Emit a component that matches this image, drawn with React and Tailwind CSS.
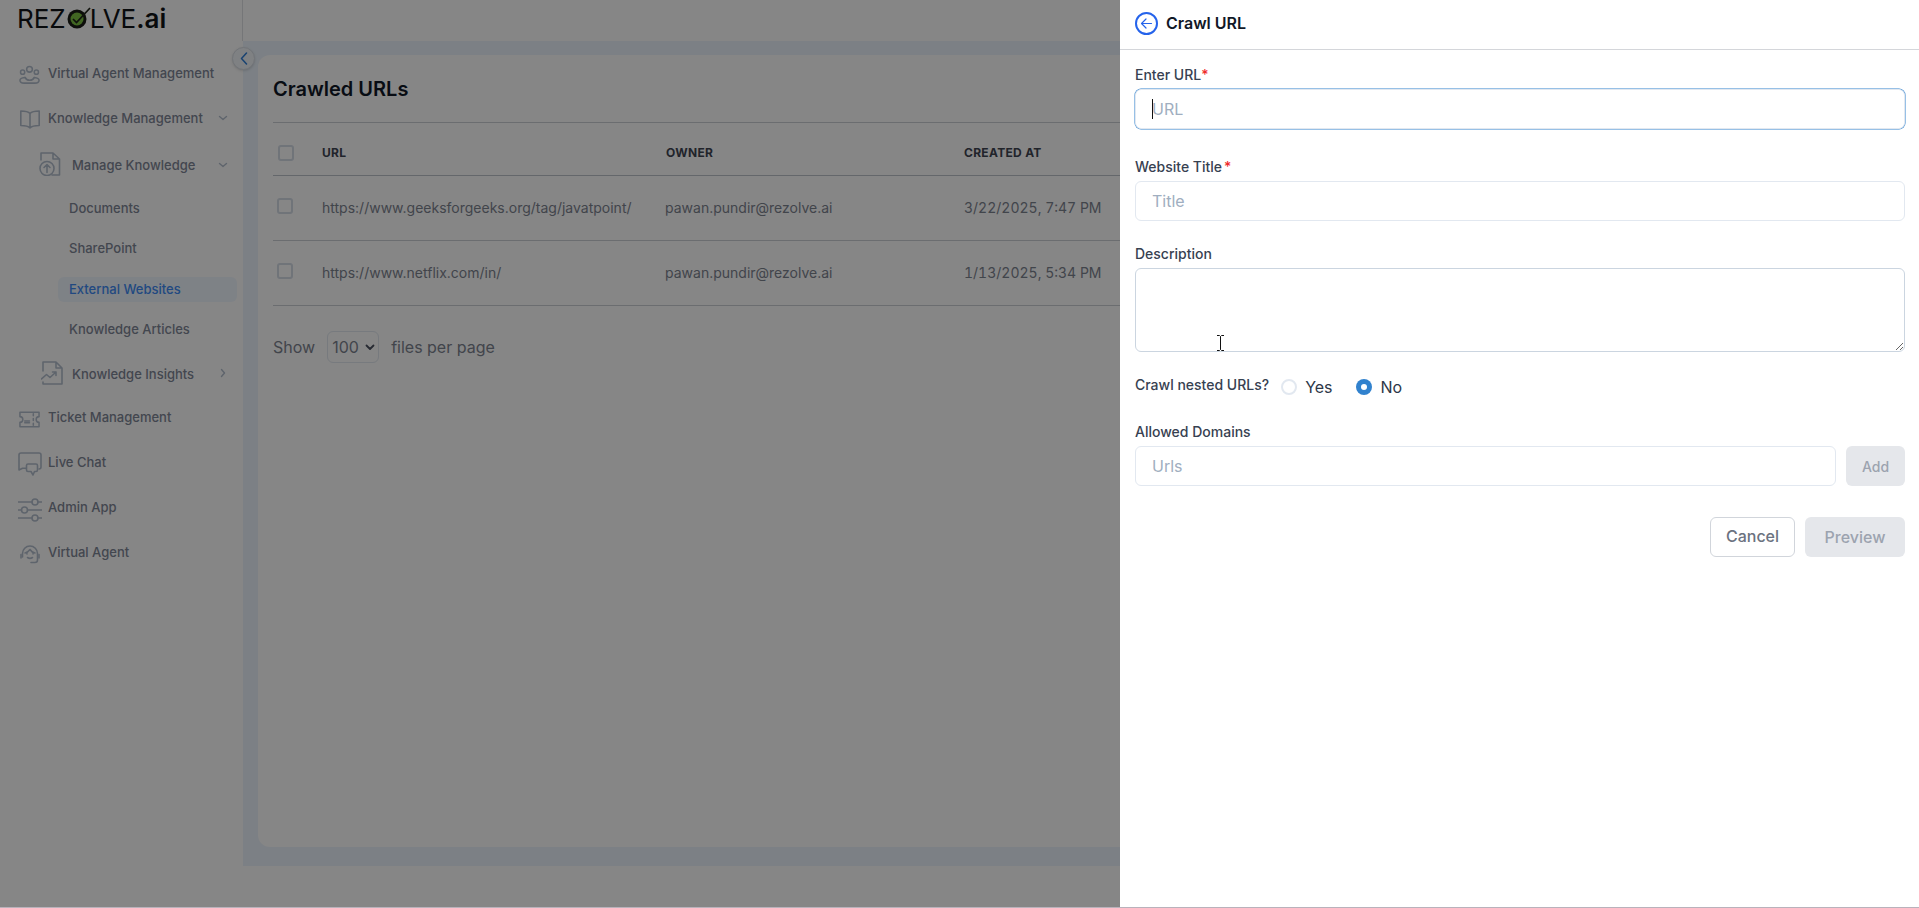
import React from "react";

const Chevron = ({ dir = "down", className = "" }) => (
  <svg width="12" height="12" viewBox="0 0 12 12" fill="none" stroke="currentColor" strokeWidth="1.4" strokeLinecap="round" strokeLinejoin="round" className={className}>
    {dir === "down" ? <path d="M2.5 4.5 6 7.5l3.5-3" /> : <path d="M4.5 2.5 7.5 6l-3 3.5" />}
  </svg>
);

const ic = { fill: "none", stroke: "currentColor", strokeWidth: 1.6, strokeLinecap: "round", strokeLinejoin: "round" };

const UsersIcon = () => (
  <svg width="22" height="20" viewBox="0 0 22 20" {...ic}>
    <circle cx="11" cy="4" r="3" />
    <circle cx="3.8" cy="7" r="2.2" />
    <circle cx="18.2" cy="7" r="2.2" />
    <path d="M6 12.5c-2.4.2-5 1-5 3s2.4 3 4.4 3h11.2c2 0 4.4-1 4.4-3s-2.6-2.8-5-3c-.6 1.6-2.8 3-4.8 3s-4.200-1.400-4.800-3Z" />
  </svg>
);
const BookIcon = () => (
  <svg width="20" height="19" viewBox="0 0 20 19" {...ic}>
    <path d="M10 3.500C8.500 1.800 5.500 1 .8 1v14.500c4.700 0 7.700.8 9.200 2.500 1.500-1.700 4.500-2.500 9.200-2.500V1C14.500 1 11.500 1.800 10 3.500Zm0 0V18" />
  </svg>
);
const ManageIcon = () => (
  <svg width="22" height="24" viewBox="0 0 22 24" {...ic}>
    <path d="M2 8V1h12l6.500 6v16H13M14 1v6h6.500" />
    <circle cx="8" cy="16.500" r="7" />
    <path d="M8 20.500v-7.500M5 15.500l3-3 3 3" />
  </svg>
);
const InsightsIcon = () => (
  <svg width="22" height="24" viewBox="0 0 22 24" {...ic}>
    <path d="M2 10V1h13l6 6v16H2v-2M15 1v6h6" />
    <path d="M.5 18l5-4.500 3.500 3 6-5.500M11.500 11H15v3.500" />
  </svg>
);
const TicketIcon = () => (
  <svg width="22" height="17" viewBox="0 0 22 17" {...ic}>
    <path d="M1 1h20v4.500a3 3 0 0 0 0 6V16H1v-4.500a3 3 0 0 0 0-6V1Z" />
    <path d="M15 2.500v2M15 7.500v2M15 12.500v2M6 10h5M6 12h5" />
  </svg>
);
const ChatIcon = () => (
  <svg width="24" height="24" viewBox="0 0 24 24" {...ic}>
    <path d="M3 1h18a2 2 0 0 1 2 2v12a2 2 0 0 1-2 2M3 1a2 2 0 0 0-2 2v15l3.500-1.800H8M1 3v14" />
    <path d="M10 12h8a1.500 1.500 0 0 1 1.500 1.500v4.500a1.500 1.500 0 0 1-1.500 1.500h-1.500L15 23l-2-3.500h-3A1.500 1.500 0 0 1 8.500 18v-4.500A1.500 1.500 0 0 1 10 12Z" />
  </svg>
);
const SlidersIcon = () => (
  <svg width="24" height="24" viewBox="0 0 24 24" {...ic}>
    <path d="M0 4h14M20 4h4M0 12h3.500M9.500 12H24M0 20h14M20 20h4" />
    <circle cx="17" cy="4" r="3" />
    <circle cx="6.500" cy="12" r="3" />
    <circle cx="17" cy="20" r="3" />
  </svg>
);
const AgentIcon = () => (
  <svg width="20" height="19" viewBox="0 0 20 19" {...ic}>
    <path d="M2.500 12V8.500a7.500 7.500 0 0 1 15 0V15a2.500 2.500 0 0 1-2.500 2.500h-4" />
    <path d="M1 9.500v3.500M19 9.500v3.500M5 8c2-.3 3.500-1.500 5-3.500 1.200 2 2.800 3.200 5 3.500M7 8.500v.5M13 8.500v.5M7.500 12.500c1.500 1 3.500 1 5 0" />
  </svg>
);

const Row = ({ h, pl, gap, icon, label, chevron, extra = "", chevClass = "" }) => (
  <div className={`flex items-center relative shrink-0 ${h} ${pl} ${extra}`}>
    <span className={`flex items-center justify-center text-[#b4bfce] shrink-0 ${gap}`}>{icon}</span>
    <span className="text-[13px] font-medium text-[#7f8797] whitespace-nowrap">{label}</span>
    {chevron && (
      <span className={`absolute left-[217px] text-[#b4bfce] ${chevClass}`}>
        <Chevron dir={chevron} />
      </span>
    )}
  </div>
);

const Sub = ({ h, label, active, extra = "" }) => (
  <div className={`flex items-center shrink-0 ml-[58px] w-[179px] pl-[11px] rounded-md ${h} ${extra} ${active ? "bg-[#f0f7ff]" : ""}`}>
    <span className={`text-[13px] font-medium whitespace-nowrap ${active ? "text-[#3f8cf5]" : "text-[#7f8797]"}`}>{label}</span>
  </div>
);

const Box = ({ className = "" }) => (
  <span className={`block w-4 h-4 rounded-[3px] border-2 border-[#d5dce6] ${className}`} />
);

const TableRow = ({ url, owner, date }) => (
  <div className="grid grid-cols-[49px_343px_299px_1fr] items-center h-[65px] border-b border-[#cbcfd6] text-sm text-[#7d8390]">
    <div className="pl-1 -mt-[5px]"><Box /></div>
    <div>{url}</div>
    <div>{owner}</div>
    <div className="tabular-nums">{date}</div>
  </div>
);

const Label = ({ children, star, starGap = "" }) => (
  <div className="h-5 flex items-center text-sm font-medium text-[#374151] leading-5">
    {children}
    {star && <span className={`text-[#ef2b2b] ${starGap}`}>*</span>}
  </div>
);

const inputCls = "block w-full h-10 px-4 rounded-md border border-[#e2e8f0] bg-white text-base text-[#1a202c] placeholder:text-[#a0aec0] outline-none";

export default function App() {
  return (
    <div className="relative w-full h-[908px] overflow-hidden bg-white font-['Inter','Liberation_Sans',sans-serif]">
      <header className="flex h-[41px]">
        <div className="w-[243px] h-full border-r border-[#dfe1e5] pl-[17px] flex items-center">
          <div className="flex items-center h-[22px] -mt-[3px] text-[#111317] text-[26px] font-normal leading-none">
            <span>REZ</span>
            <svg width="22" height="22" viewBox="0 0 22 22" className="mx-[1px] overflow-visible">
              <circle cx="10" cy="11" r="9.500" fill="#1a1c16" />
              <circle cx="10" cy="11" r="6.500" fill="#7cc242" />
              <path d="M6 11l3.500 3.500L23 0" fill="none" stroke="#20241a" strokeWidth="1.700" />
            </svg>
            <span>LVE</span>
            <span className="font-semibold">.ai</span>
          </div>
        </div>
        <div className="flex-1" />
      </header>

      <div className="flex h-[825px]">
        <aside className="w-[243px] shrink-0 flex flex-col pt-[10px] relative">
          <Row h="h-[45px]" pl="pl-[19px]" gap="w-[21px] mr-[8px] mt-[3px]" icon={<UsersIcon />} label="Virtual Agent Management" />
          <Row h="h-[45px]" pl="pl-[19px]" gap="w-[21px] mr-[8px] mt-[2px]" icon={<BookIcon />} label="Knowledge Management" chevron="down" chevClass="-mt-[2px]" />
          <Row h="h-[49px]" pl="pl-[39px]" gap="w-[22px] mr-[11px] -mt-[3px]" icon={<ManageIcon />} label="Manage Knowledge" chevron="down" chevClass="-mt-[2px]" />
          <Sub h="h-[38px]" label="Documents" />
          <Sub h="h-[42px]" label="SharePoint" />
          <Sub h="h-[25px]" label="External Websites" active extra="mt-[7px]" />
          <Sub h="h-[56px]" label="Knowledge Articles" />
          <Row h="h-[33px]" pl="pl-[41px]" gap="w-[22px] mr-[9px] -mt-[3px]" icon={<InsightsIcon />} label="Knowledge Insights" chevron="right" chevClass="-mt-[3px]" />
          <Row h="h-[45px]" pl="pl-[19px]" gap="w-[21px] mr-[8px] mt-[3px]" icon={<TicketIcon />} label="Ticket Management" extra="mt-[4px]" />
          <Row h="h-[45px]" pl="pl-[18px]" gap="w-[24px] mr-[6px] mt-[3px]" icon={<ChatIcon />} label="Live Chat" />
          <Row h="h-[45px]" pl="pl-[18px]" gap="w-[24px] mr-[6px] mt-[5px]" icon={<SlidersIcon />} label="Admin App" />
          <Row h="h-[45px]" pl="pl-[20px]" gap="w-[20px] mr-[8px] mt-[3px]" icon={<AgentIcon />} label="Virtual Agent" />
          <button className="absolute top-[6px] left-[232px] w-[23px] h-[23px] rounded-full bg-[#f1f5f9] border border-[#d8dde4] shadow-sm flex items-center justify-center text-[#2f7fd8]">
            <svg width="8" height="13" viewBox="0 0 8 13" fill="none" stroke="currentColor" strokeWidth="1.500" strokeLinecap="round" strokeLinejoin="round">
              <path d="M6.500 1 1.500 6.500l5 5.500" />
            </svg>
          </button>
        </aside>
        <main className="flex-1 bg-[#ecf4fd] pl-[15px] pr-[15px] pt-[14px] pb-[19px]">
          <div className="h-full bg-white rounded-xl pt-[21px] px-[15px]">
            <h1 className="text-xl font-semibold text-[#111827] h-[27px] leading-[27px]">Crawled URLs</h1>
            <div className="mt-[19px] border-t border-[#cbcfd6]">
              <div className="grid grid-cols-[49px_343px_299px_1fr] items-center h-[53px] pt-[8px] border-b border-[#bfc4cc] text-xs font-bold tracking-[0.3px] text-[#3f4653]">
                <div className="pl-[5px]"><Box /></div>
                <div>URL</div>
                <div className="pl-[1px]">OWNER</div>
                <div>CREATED AT</div>
              </div>
              <TableRow url="https://www.geeksforgeeks.org/tag/javatpoint/" owner="pawan.pundir@rezolve.ai" date="3/22/2025, 7:47 PM" />
              <TableRow url="https://www.netflix.com/in/" owner="pawan.pundir@rezolve.ai" date="1/13/2025, 5:34 PM" />
            </div>
            <div className="flex items-center mt-[25px] text-base text-[#7d8390]">
              <span>Show</span>
              <div className="relative ml-[12px] w-[52px] h-[32px]">
                <select className="block w-full h-full appearance-none rounded-md border border-[#e2e8f0] bg-white pl-[4px] text-base text-[#7d8390] outline-none">
                  <option>100</option>
                </select>
                <svg width="12" height="12" viewBox="0 0 12 12" fill="none" stroke="#4a5060" strokeWidth="1.800" strokeLinecap="round" strokeLinejoin="round" className="absolute right-[3px] top-[10px] pointer-events-none">
                  <path d="M2.500 4.500 6 8l3.500-3.500" />
                </svg>
              </div>
              <span className="ml-[12px]">files per page</span>
            </div>
          </div>
        </main>
      </div>

      <div className="absolute inset-0 bg-black/[0.475]" />

      <div className="absolute top-0 right-0 bottom-[1px] w-[799px] bg-white flex flex-col">
        <div className="h-[50px] shrink-0 border-b border-[#d4d6da] pl-[15px] pb-[3px] flex items-center">
          <span className="w-[23px] h-[23px] rounded-full border-2 border-[#2563eb] flex items-center justify-center text-[#2563eb]">
            <svg width="15" height="15" viewBox="0 0 15 15" fill="none" stroke="currentColor" strokeWidth="1.200" strokeLinecap="round" strokeLinejoin="round">
              <path d="M12.500 7.500h-10M7 3 2.500 7.500 7 12" />
            </svg>
          </span>
          <span className="ml-2 text-base font-semibold text-[#111827]">Crawl URL</span>
        </div>
        <div className="px-[15px] pr-[14px] pt-[15px] flex-1 relative">
          <Label star>Enter URL</Label>
          <div className="relative mt-[4px]">
            <input placeholder="URL" className={`${inputCls} border-[#3182ce] shadow-[0_0_0_0.5px_#3182ce]`} />
            <span className="absolute left-[17px] top-[10px] w-px h-[20px] bg-[#111]" />
          </div>
          <div className="mt-[28px]"><Label star starGap="ml-[2px]">Website Title</Label></div>
          <input placeholder="Title" className={`${inputCls} mt-[4px]`} />
          <div className="mt-[23px]"><Label>Description</Label></div>
          <textarea className="block w-full h-[84px] mt-[4px] px-4 py-2 rounded-md border border-[#cbd5e0] bg-white text-base outline-none" />
          <div className="flex items-center mt-[23px] h-[24px]">
            <span className="text-sm font-medium text-[#374151] -mt-[4px]">Crawl nested URLs?</span>
            <span className="ml-[12px] w-4 h-4 rounded-full border-2 border-[#e2e8f0] bg-white" />
            <span className="ml-[8px] text-base text-[#2d3748]">Yes</span>
            <span className="ml-[23px] w-4 h-4 rounded-full bg-[#3182ce] flex items-center justify-center">
              <span className="w-[6px] h-[6px] rounded-full bg-white" />
            </span>
            <span className="ml-[9px] text-base text-[#2d3748]">No</span>
          </div>
          <div className="mt-[23px]"><Label>Allowed Domains</Label></div>
          <div className="flex mt-[4px] gap-[10px]">
            <input placeholder="Urls" className={`${inputCls} flex-1 min-w-0`} />
            <button className="w-[59px] h-10 pt-[1px] rounded-md bg-[#e5e7eb] text-sm font-medium text-[#9ca3af]">Add</button>
          </div>
          <div className="flex justify-end gap-[10px] mt-[31px]">
            <button className="w-[85px] h-10 pb-[2px] rounded-md border border-[#d1d5db] bg-white text-base font-medium text-[#6b7280]">Cancel</button>
            <button className="w-[100px] h-10 rounded-md bg-[#e5e7eb] text-base font-medium text-[#9ca3af]">Preview</button>
          </div>
          <svg width="9" height="16" viewBox="0 0 9 16" fill="none" stroke="#111" strokeWidth="1" className="absolute left-[96px] top-[285px]">
            <path d="M1 .5h2.500L4.500 1.500 5.500.5H8M4.500 1.500v13M1 15.500h2.500l1-1 1 1H8" />
          </svg>
        </div>
      </div>
      <div className="absolute bottom-0 left-0 right-0 h-px bg-[#b9b2bb]" />
    </div>
  );
}
